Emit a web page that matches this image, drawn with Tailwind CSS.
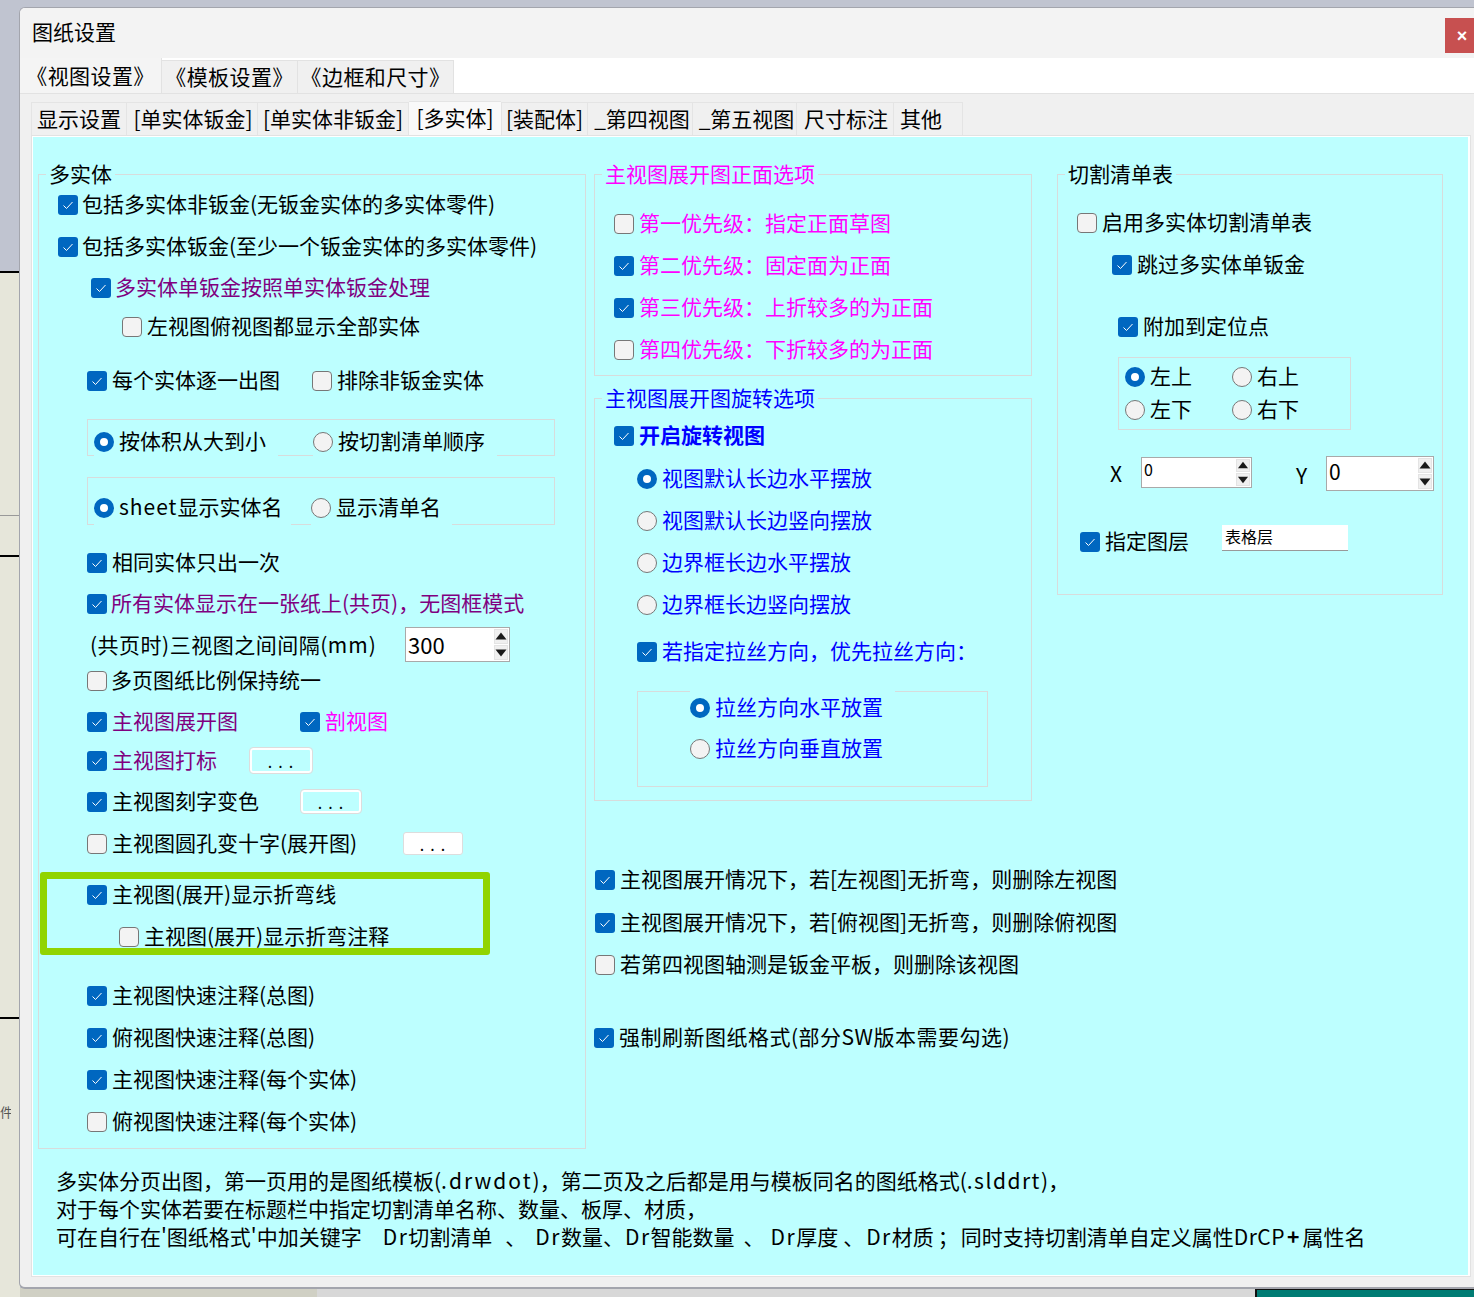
<!DOCTYPE html>
<html lang="zh-CN">
<head>
  <meta charset="UTF-8">
  <title>图纸设置</title>
  <script src="https://cdn.jsdelivr.net/npm/@tailwindcss/browser@4"></script>
</head>
<body class="relative w-[1474px] h-[1297px] overflow-hidden bg-[#c0c4d0] font-['Noto_Sans_CJK_SC','Noto_Sans',sans-serif] text-[21px] leading-[28px] text-black">

  <!-- desktop behind the dialog -->
  <div class="absolute left-0 top-[271px] w-[20px] h-[1026px] bg-[#e6e6da]">
    <div class="absolute left-0 top-0 w-full h-[2px] bg-black"></div>
    <div class="absolute left-0 top-[244px] w-full h-px bg-[#999999]"></div>
    <div class="absolute left-0 top-[284px] w-full h-[2px] bg-black"></div>
    <div class="absolute left-0 top-[746px] w-full h-[2px] bg-black"></div>
    <div class="absolute left-0 top-[832px] text-[13px] leading-[18px] text-[#555555] w-[11px] overflow-hidden">件</div>
  </div>
  <div class="absolute left-[20px] top-[1288px] w-[297px] h-[9px] bg-[#d0d0c4]"></div>
  <div class="absolute left-[317px] top-[1288px] w-[938px] h-[9px] bg-[#d8d8d8]"></div>
  <div class="absolute left-[1255px] top-[1288px] w-[219px] h-[9px] bg-[#007c74] border-t-2 border-l-2 border-[#111111]"></div>

  <!-- dialog -->
  <div class="absolute left-[19px] top-[7px] w-[1455px] h-[1282px] bg-[#f0f0f0] rounded-l-[6px] border-t border-l border-b-2 border-[#a3a5ad] overflow-hidden">
    <div class="h-[50px] bg-[#f3f3f3] flex items-start justify-between">
      <div class="pl-[12px] pt-[9px]">图纸设置</div>
      <div class="mt-[10px] -mr-[5px] w-[34px] h-[35px] shrink-0 bg-[#c75050] text-white flex items-center justify-center text-[18px] font-bold font-['Liberation_Sans',sans-serif]">×</div>
    </div>

    <div class="h-[36px] bg-white border-b border-[#e2e2e2] flex items-end tracking-[0.4px]">
      <div class="w-[142px] h-[35px] bg-[#f4f4f4] flex items-center justify-center pb-[2px] border-r border-[#e2e2e2]">《视图设置》</div>
      <div class="w-[136px] h-[33px] bg-[#f0f0f0] flex items-center justify-center pb-[2px] border-r border-t border-[#e2e2e2]">《模板设置》</div>
      <div class="w-[156px] h-[33px] bg-[#f0f0f0] flex items-center justify-center pb-[2px] border-r border-t border-[#e2e2e2]">《边框和尺寸》</div>
    </div>

    <div class="flex items-end pl-[11px] h-[41px]">
      <div class="w-[96px] h-[33px] pb-[3px] border-t border-r border-l border-[#e4e4e4] flex items-center justify-center whitespace-nowrap">显示设置</div>
      <div class="w-[131px] h-[33px] pb-[3px] pl-[2px] border-t border-r border-[#e4e4e4] flex items-center justify-center whitespace-nowrap">[单实体钣金]</div>
      <div class="w-[151px] h-[33px] pb-[3px] border-t border-r border-[#e4e4e4] flex items-center justify-center whitespace-nowrap">[单实体非钣金]</div>
      <div class="w-[92px] h-[34px] bg-[#f9f9f9] border-t border-[#e4e4e4] flex items-start justify-center whitespace-nowrap pt-[1px]">[多实体]</div>
      <div class="w-[87px] h-[33px] pb-[3px] border-t border-r border-l border-[#e4e4e4] flex items-center justify-center whitespace-nowrap">[装配体]</div>
      <div class="w-[105px] h-[33px] pb-[3px] pl-[4px] border-t border-r border-[#e4e4e4] flex items-center justify-center whitespace-nowrap">_第四视图</div>
      <div class="w-[104px] h-[33px] pb-[3px] pl-[4px] border-t border-r border-[#e4e4e4] flex items-center justify-center whitespace-nowrap">_第五视图</div>
      <div class="w-[97px] h-[33px] pb-[3px] pl-[2px] border-t border-r border-[#e4e4e4] flex items-center justify-center whitespace-nowrap">尺寸标注</div>
      <div class="w-[69px] h-[33px] pb-[3px] border-t border-r border-[#e4e4e4] flex items-center justify-start pl-[6px] whitespace-nowrap">其他</div>
    </div>

    <div class="ml-[11px] w-[1440px] h-[1142px] border border-[#e2e2e2] bg-white pt-px pl-px pr-[2px]">
      <div class="relative h-[1138px] bg-[#bdffff] pt-[37px]">
        <div class="flex items-start h-[975px] pl-[5px]">

          <!-- left column -->
          <div class="relative w-[548px] h-[975px] border border-[#d8dcdc] pt-[14px]">
            <div class="absolute left-[7px] -top-[16px] px-[3px] bg-[#bdffff]">多实体</div>
            <div class="flex items-center h-[28px] pl-[19px] gap-[4px]"><i data-box="on"></i><span>包括多实体非钣金(无钣金实体的多实体零件)</span></div>
            <div class="flex items-center h-[28px] pl-[19px] gap-[4px] mt-[14px]"><i data-box="on"></i><span>包括多实体钣金(至少一个钣金实体的多实体零件)</span></div>
            <div class="flex items-center h-[28px] pl-[52px] gap-[4px] mt-[13px] text-[#800080]"><i data-box="on"></i><span>多实体单钣金按照单实体钣金处理</span></div>
            <div class="flex items-center h-[28px] pl-[83px] gap-[5px] mt-[11px]"><i data-box="off"></i><span>左视图俯视图都显示全部实体</span></div>
            <div class="flex items-center h-[28px] pl-[48px] mt-[26px]">
              <i data-box="on"></i><span class="ml-[5px] w-[200px]">每个实体逐一出图</span>
              <i data-box="off"></i><span class="ml-[5px]">排除非钣金实体</span>
            </div>

            <div class="ml-[48px] mt-[26px] w-[468px] h-[37px] border border-[#d8dcdc] flex items-end pl-[6px]">
              <div class="w-[184px] h-[32px] -mb-px bg-[#bdffff] flex items-center gap-[5px]"><i data-radio="on"></i><span>按体积从大到小</span></div>
              <div class="ml-[35px] w-[184px] h-[32px] -mb-px bg-[#bdffff] flex items-center gap-[5px]"><i data-radio="off"></i><span>按切割清单顺序</span></div>
            </div>
            <div class="ml-[48px] mt-[21px] w-[468px] h-[48px] border border-[#d8dcdc] flex items-end pl-[6px]">
              <div class="w-[197px] h-[38px] -mb-px bg-[#bdffff] flex items-center gap-[5px]"><i data-radio="on"></i><span><span class="tracking-[1px]">sheet</span>显示实体名</span></div>
              <div class="ml-[20px] w-[141px] h-[38px] -mb-px bg-[#bdffff] flex items-center gap-[5px]"><i data-radio="off"></i><span>显示清单名</span></div>
            </div>

            <div class="flex items-center h-[28px] pl-[48px] gap-[5px] mt-[22px]"><i data-box="on"></i><span>相同实体只出一次</span></div>
            <div class="flex items-center h-[28px] pl-[48px] gap-[4px] mt-[13px] text-[#800080]"><i data-box="on"></i><span>所有实体显示在一张纸上(共页)，无图框模式</span></div>
            <div class="flex items-center h-[36px] pl-[51px] mt-[10px]">
              <span class="w-[315px] tracking-[0.5px]">(共页时)三视图之间间隔(<span class="tracking-[1px]">mm</span>)</span>
              <div data-spin class="w-[105px] h-[35px] text-[22px] pl-[2px] pt-[2px]">300</div>
            </div>
            <div class="flex items-center h-[28px] pl-[48px] gap-[4px] mt-[3px]"><i data-box="off"></i><span>多页图纸比例保持统一</span></div>
            <div class="flex items-center h-[28px] pl-[48px] mt-[13px]">
              <i data-box="on"></i><span class="ml-[5px] w-[188px] text-[#800080]">主视图展开图</span>
              <i data-box="on"></i><span class="ml-[5px] text-[#ff00ff]">剖视图</span>
            </div>
            <div class="flex items-center h-[28px] pl-[48px] mt-[11px]">
              <i data-box="on"></i><span class="ml-[5px] w-[138px] text-[#800080]">主视图打标</span>
              <div class="mt-[2px] w-[62px] h-[25px] bg-[#bdffff] border-2 border-white rounded-[3px] outline outline-[#dddddd] text-[16px] tracking-[6px] flex items-center justify-center pt-[2px] pl-[5px]">...</div>
            </div>
            <div class="flex items-center h-[28px] pl-[48px] mt-[13px]">
              <i data-box="on"></i><span class="ml-[5px] w-[189px]">主视图刻字变色</span>
              <div class="mt-[2px] w-[60px] h-[23px] bg-[#bdffff] border-2 border-white rounded-[3px] outline outline-[#dddddd] text-[16px] tracking-[6px] flex items-center justify-center pt-[2px] pl-[5px]">...</div>
            </div>
            <div class="flex items-center h-[28px] pl-[48px] mt-[14px]">
              <i data-box="off"></i><span class="ml-[5px] w-[291px]">主视图圆孔变十字(展开图)</span>
              <div class="mt-[2px] w-[60px] h-[23px] bg-white rounded-[3px] border border-[#dddddd] text-[16px] tracking-[6px] flex items-center justify-center pt-[2px] pl-[5px]">...</div>
            </div>
            <div class="flex items-center h-[28px] pl-[48px] gap-[5px] mt-[23px]"><i data-box="on"></i><span>主视图(展开)显示折弯线</span></div>
            <div class="flex items-center h-[28px] pl-[80px] gap-[5px] mt-[14px]"><i data-box="off"></i><span>主视图(展开)显示折弯注释</span></div>
            <div class="flex items-center h-[28px] pl-[48px] gap-[5px] mt-[31px]"><i data-box="on"></i><span>主视图快速注释(总图)</span></div>
            <div class="flex items-center h-[28px] pl-[48px] gap-[5px] mt-[14px]"><i data-box="on"></i><span>俯视图快速注释(总图)</span></div>
            <div class="flex items-center h-[28px] pl-[48px] gap-[5px] mt-[14px]"><i data-box="on"></i><span>主视图快速注释(每个实体)</span></div>
            <div class="flex items-center h-[28px] pl-[48px] gap-[5px] mt-[14px]"><i data-box="off"></i><span>俯视图快速注释(每个实体)</span></div>
            <!-- green highlight drawn on top of the screenshot -->
            <div class="absolute left-[1px] top-[697px] w-[450px] h-[83px] border-[7px] border-[#91d400] rounded-[3px]"></div>
          </div>

          <!-- middle column -->
          <div class="ml-[8px] w-[438px]">
            <div class="relative h-[202px] border border-[#d8dcdc] pt-[33px] text-[#ff00ff]">
              <div class="absolute left-[7px] -top-[16px] px-[3px] bg-[#bdffff]">主视图展开图正面选项</div>
              <div class="flex items-center h-[28px] pl-[19px] gap-[5px]"><i data-box="off"></i><span>第一优先级：指定正面草图</span></div>
              <div class="flex items-center h-[28px] pl-[19px] gap-[5px] mt-[14px]"><i data-box="on"></i><span>第二优先级：固定面为正面</span></div>
              <div class="flex items-center h-[28px] pl-[19px] gap-[5px] mt-[14px]"><i data-box="on"></i><span>第三优先级：上折较多的为正面</span></div>
              <div class="flex items-center h-[28px] pl-[19px] gap-[5px] mt-[14px]"><i data-box="off"></i><span>第四优先级：下折较多的为正面</span></div>
            </div>
            <div class="relative h-[403px] mt-[22px] border border-[#d8dcdc] pt-[21px] text-[#0000ff]">
              <div class="absolute left-[7px] -top-[16px] px-[3px] bg-[#bdffff]">主视图展开图旋转选项</div>
              <div class="flex items-center h-[28px] pl-[19px] gap-[5px] font-bold"><i data-box="on"></i><span>开启旋转视图</span></div>
              <div class="flex items-center h-[28px] pl-[42px] gap-[5px] mt-[15px]"><i data-radio="on"></i><span>视图默认长边水平摆放</span></div>
              <div class="flex items-center h-[28px] pl-[42px] gap-[5px] mt-[14px]"><i data-radio="off"></i><span>视图默认长边竖向摆放</span></div>
              <div class="flex items-center h-[28px] pl-[42px] gap-[5px] mt-[14px]"><i data-radio="off"></i><span>边界框长边水平摆放</span></div>
              <div class="flex items-center h-[28px] pl-[42px] gap-[5px] mt-[14px]"><i data-radio="off"></i><span>边界框长边竖向摆放</span></div>
              <div class="flex items-center h-[28px] pl-[42px] gap-[5px] mt-[19px]"><i data-box="on"></i><span>若指定拉丝方向，优先拉丝方向：</span></div>
              <div class="ml-[42px] mt-[27px] w-[351px] h-[96px] border border-[#d8dcdc] pl-[52px]">
                <div class="-mt-px w-[205px] h-[30px] bg-[#bdffff] flex items-center gap-[5px]"><i data-radio="on"></i><span>拉丝方向水平放置</span></div>
                <div class="mt-[11px] w-[205px] h-[30px] flex items-center gap-[5px]"><i data-radio="off"></i><span>拉丝方向垂直放置</span></div>
              </div>
            </div>
            <div class="flex items-center h-[28px] gap-[5px] mt-[63px] pl-px"><i data-box="on"></i><span class="whitespace-nowrap">主视图展开情况下，若[左视图]无折弯，则删除左视图</span></div>
            <div class="flex items-center h-[28px] gap-[5px] mt-[15px] pl-px"><i data-box="on"></i><span class="whitespace-nowrap">主视图展开情况下，若[俯视图]无折弯，则删除俯视图</span></div>
            <div class="flex items-center h-[28px] gap-[5px] mt-[14px] pl-px"><i data-box="off"></i><span class="whitespace-nowrap">若第四视图轴测是钣金平板，则删除该视图</span></div>
            <div class="flex items-center h-[28px] gap-[5px] mt-[45px]"><i data-box="on"></i><span class="whitespace-nowrap tracking-[0.5px]">强制刷新图纸格式(部分SW版本需要勾选)</span></div>
          </div>

          <!-- right column -->
          <div class="relative ml-[25px] w-[386px] h-[421px] border border-[#d8dcdc] pt-[32px]">
            <div class="absolute left-[7px] -top-[16px] px-[3px] bg-[#bdffff]">切割清单表</div>
            <div class="flex items-center h-[28px] pl-[19px] gap-[5px]"><i data-box="off"></i><span>启用多实体切割清单表</span></div>
            <div class="flex items-center h-[28px] pl-[54px] gap-[5px] mt-[14px]"><i data-box="on"></i><span>跳过多实体单钣金</span></div>
            <div class="flex items-center h-[28px] pl-[60px] gap-[5px] mt-[34px]"><i data-box="on"></i><span>附加到定位点</span></div>
            <div class="ml-[60px] mt-[18px] w-[233px] h-[73px] border border-[#d8dcdc] pl-[6px] pt-[3px]">
              <div class="flex items-center h-[28px]"><i data-radio="on"></i><span class="ml-[5px] w-[82px]">左上</span><i data-radio="off"></i><span class="ml-[5px]">右上</span></div>
              <div class="flex items-center h-[28px] mt-[5px]"><i data-radio="off"></i><span class="ml-[5px] w-[82px]">左下</span><i data-radio="off"></i><span class="ml-[5px]">右下</span></div>
            </div>
            <div class="flex items-center h-[36px] mt-[25px] pl-[52px]">
              <span class="w-[31px]">X</span>
              <div data-spin class="w-[111px] h-[31px] text-[16px] leading-[22px] pl-[2px] mt-[-1px]">0</div>
              <span class="ml-[44px] w-[30px] mt-[4px]">Y</span>
              <div data-spin class="w-[108px] h-[35px] text-[21px] pl-[2px]">0</div>
            </div>
            <div class="flex items-center h-[28px] pl-[22px] mt-[35px]">
              <i data-box="on"></i><span class="ml-[5px] w-[117px]">指定图层</span>
              <div class="w-[126px] h-[26px] -mt-[4px] bg-white border-b border-[#999999] text-[16px] leading-[22px] pl-[3px]">表格层</div>
            </div>
          </div>
        </div>

        <div class="pl-[23px] mt-[17px]">
          <div class="whitespace-nowrap">多实体分页出图，第一页用的是图纸模板(<span class="tracking-[2px]">.drwdot</span>)，第二页及之后都是用与模板同名的图纸格式(<span class="tracking-[1.5px]">.slddrt</span>)，</div>
          <div class="whitespace-nowrap">对于每个实体若要在标题栏中指定切割清单名称、数量、板厚、材质，</div>
          <div class="whitespace-nowrap">可在自行在'图纸格式'中加关键字<span class="ml-[21px] tracking-[1.5px]">Dr</span><span>切割清单</span><span class="ml-[13px]">、</span><span class="ml-[9px] tracking-[1.5px]">Dr</span><span>数量、</span><span class="ml-[1px] tracking-[1.5px]">Dr</span><span>智能数量</span><span class="ml-[9px]">、</span><span class="ml-[6px] tracking-[1.5px]">Dr</span><span>厚度</span><span class="ml-[5px]">、</span><span class="ml-[2px] tracking-[1.5px]">Dr</span><span>材质</span><span class="ml-[4px]">；</span><span class="ml-[2px]">同时支持切割清单自定义属性</span><span class="tracking-[0.5px]">DrCP</span><span class="ml-[2px] font-bold">+</span><span class="ml-[3px]">属性名</span></div>
        </div>
      </div>
    </div>
  </div>

  <script>
    const check = '<svg viewBox="0 0 20 20" class="w-full h-full"><path d="M5.5 10.5l3 3 6-6.5" fill="none" stroke="#fff" stroke-width="1"/></svg>';
    const tri = '<svg viewBox="1 1 12 12" class="w-full h-full"><path d="M7 3l5.5 7h-11z" fill="#1a1a1a"/></svg>';
    const triDown = '<svg viewBox="1 1 12 12" class="w-full h-full"><path d="M7 11L1.5 4h11z" fill="#1a1a1a"/></svg>';

    document.querySelectorAll("[data-box]").forEach(el => {
      if (el.dataset.box === "on") {
        el.className = "block shrink-0 mt-[4px] w-[20px] h-[20px] rounded-[3px] bg-[#0067c0]";
        el.innerHTML = check;
      } else {
        el.className = "block shrink-0 mt-[4px] w-[20px] h-[20px] rounded-[4px] bg-[#f3f3f3] border border-[#777777]";
      }
    });

    document.querySelectorAll("[data-radio]").forEach(el => {
      el.className = el.dataset.radio === "on"
        ? "block shrink-0 mt-[4px] w-[20px] h-[20px] rounded-full bg-white border-[6px] border-[#0067c0]"
        : "block shrink-0 mt-[4px] w-[20px] h-[20px] rounded-full bg-[#f3f3f3] border border-[#777777]";
    });

    // number boxes: the two little arrow buttons on the right
    document.querySelectorAll("[data-spin]").forEach(el => {
      el.classList.add("relative", "shrink-0", "bg-white", "border", "border-[#a9a9a9]");
      const arrows = document.createElement("div");
      arrows.className = "absolute right-[1px] top-[1px] bottom-[1px] w-[14px] flex flex-col gap-[1px]";
      arrows.innerHTML = `<div class="flex-1 min-h-0 bg-[#f0f0f0] border border-[#e4e4e4] overflow-hidden">${tri}</div><div class="flex-1 min-h-0 bg-[#f0f0f0] border border-[#e4e4e4] overflow-hidden">${triDown}</div>`;
      el.appendChild(arrows);
    });
  </script>
</body>
</html>
